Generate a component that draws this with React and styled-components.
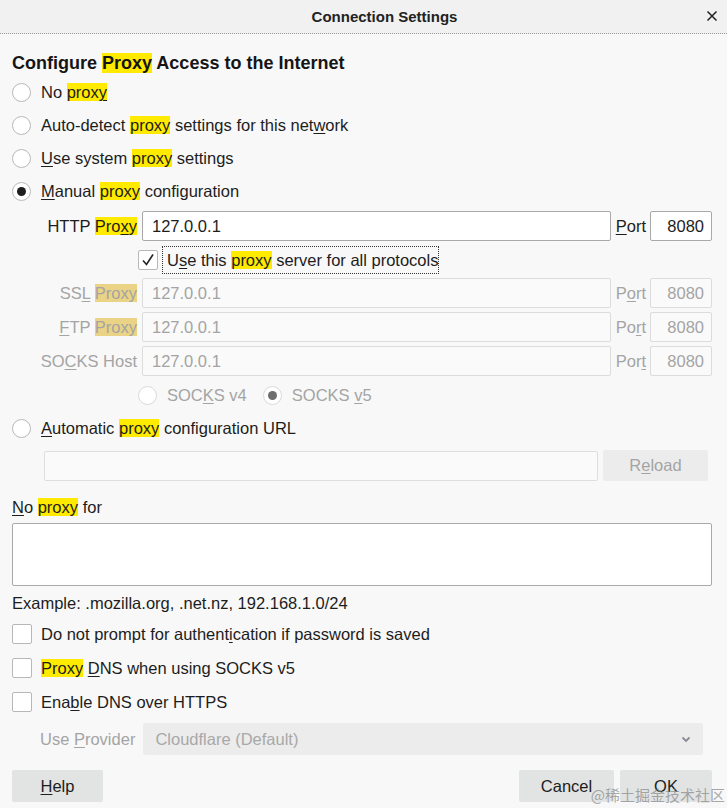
import styled, { createGlobalStyle } from 'styled-components';

const GlobalStyle = createGlobalStyle`
    body {
        margin: 0;
        background: #f8f8f8;
        font-family: "Liberation Sans", Arial, sans-serif;
        color: #1d1d1d;
    }
`;

const Window = styled.div`
    position: relative;
    width: 727px;
    height: 808px;
    overflow: hidden;
    background: #f8f8f8;
    font-size: 16.5px;
`;

const TitleBar = styled.div`
    position: relative;
    height: 33px;
    display: flex;
    align-items: center;
    justify-content: center;
    padding-left: 42px;
    background: #f1f1f1;
    border-bottom: 1px dotted #9a9a9a;
    font-size: 15px;
    font-weight: bold;
    color: #222;
`;

const CloseButton = styled.div`
    position: absolute;
    right: 9px;
    top: 10px;
    width: 12px;
    height: 12px;
    display: flex;
`;

const Content = styled.div`
    padding: 0 15px 0 12px;
`;

const Heading = styled.div`
    margin: 18px 0 2px;
    font-size: 18px;
    font-weight: bold;
    line-height: 22px;
    color: #151515;
`;

const Hl = styled.span`
    background: ${({ $disabled }) => ($disabled ? '#ead384' : '#ffea00')};
`;

const Key = styled.span`
    text-decoration: underline;
    text-underline-offset: 2px;
    text-decoration-thickness: 1px;
`;

const OptionRow = styled.div`
    height: 33px;
    display: flex;
    align-items: center;
    gap: 10px;
`;

const Radio = styled.span`
    width: 17px;
    height: 17px;
    border-radius: 50%;
    border: 1px solid ${({ $disabled }) => ($disabled ? '#dadada' : '#b9b9b9')};
    background: #fff;
    display: flex;
    align-items: center;
    justify-content: center;
    flex-shrink: 0;
    &::after {
        content: '';
        display: ${({ $checked }) => ($checked ? 'block' : 'none')};
        width: 9px;
        height: 9px;
        border-radius: 50%;
        background: ${({ $disabled }) => ($disabled ? '#6e6e6e' : '#1e1e1e')};
    }
`;

const Box = styled.span`
    width: 18px;
    height: 18px;
    border: 1px solid #b8b8b8;
    border-radius: 2px;
    background: #fff;
    display: flex;
    align-items: center;
    justify-content: center;
    flex-shrink: 0;
`;

const ProxyGrid = styled.div`
    margin-top: 1px;
    display: grid;
    grid-template-columns: 125px 1fr auto 62px;
    grid-template-rows: 34px 33px 34px 34px 34px 34px;
    column-gap: 5px;
    align-items: center;
`;

const FieldLabel = styled.div`
    text-align: right;
    white-space: nowrap;
    color: ${({ $disabled }) => ($disabled ? '#a4a4a4' : '#1d1d1d')};
`;

const PortLabel = styled(FieldLabel)`
    margin-right: -1px;
`;

const Input = styled.div`
    height: 28px;
    display: flex;
    align-items: center;
    justify-content: ${({ $right }) => ($right ? 'flex-end' : 'flex-start')};
    padding: 0 ${({ $right }) => ($right ? '7px' : '9px')};
    background: ${({ $disabled }) => ($disabled ? '#fafafa' : '#fff')};
    border: 1px solid ${({ $disabled }) => ($disabled ? '#dcdcdc' : '#a9a9a9')};
    border-radius: 2px;
    color: ${({ $disabled }) => ($disabled ? '#a4a4a4' : '#1d1d1d')};
`;

const SpanRow = styled.div`
    grid-column: 2 / 5;
    display: flex;
    align-items: center;
    margin-left: -4px;
    gap: ${({ $gap }) => $gap || 4}px;
    color: ${({ $disabled }) => ($disabled ? '#a4a4a4' : 'inherit')};
`;

const FocusLabel = styled.span`
    display: inline-block;
    height: 26px;
    line-height: 26px;
    padding: 0 0 0 4px;
    border: 1px dotted #333;
    white-space: nowrap;
`;

const RadioPair = styled.span`
    display: flex;
    align-items: center;
    gap: 10px;
    margin-right: 12px;
`;

const UrlRow = styled.div`
    margin-top: 5px;
    padding: 0 4px 0 32px;
    display: flex;
    align-items: center;
    gap: 5px;
`;

const UrlInput = styled.div`
    flex: 1;
    height: 28px;
    background: #fafafa;
    border: 1px solid #dedede;
    border-radius: 2px;
`;

const Button = styled.div`
    width: ${({ $w }) => $w}px;
    height: ${({ $h }) => $h || 32}px;
    display: flex;
    align-items: center;
    justify-content: center;
    background: ${({ $disabled }) => ($disabled ? '#ececec' : '#e2e4e4')};
    color: ${({ $disabled }) => ($disabled ? '#a4a4a4' : '#1d1d1d')};
    border-radius: 2px;
`;

const SectionLabel = styled.div`
    margin-top: 16px;
    line-height: 20px;
`;

const TextArea = styled.div`
    margin-top: 6px;
    height: 61px;
    background: #fff;
    border: 1px solid #a9a9a9;
    border-radius: 2px;
`;

const Example = styled.div`
    margin-top: 7px;
    line-height: 20px;
`;

const CheckList = styled.div`
    margin-top: 4px;
`;

const CheckRow = styled.div`
    height: 34px;
    display: flex;
    align-items: center;
    gap: 9px;
`;

const ProviderRow = styled.div`
    margin-top: 4px;
    height: 32px;
    padding: 0 9px 0 28px;
    display: flex;
    align-items: center;
    gap: 8px;
    color: #a4a4a4;
`;

const Select = styled.div`
    flex: 1;
    height: 32px;
    display: flex;
    align-items: center;
    justify-content: space-between;
    padding: 0 12px 0 12px;
    background: #ececec;
    border-radius: 2px;
    color: #a8a8a8;
`;

const ButtonBar = styled.div`
    margin-top: 15px;
    display: flex;
    align-items: center;
    gap: 6px;
`;

const Spacer = styled.div`
    flex: 1;
`;

const Watermark = styled.div`
    position: absolute;
    right: 2px;
    bottom: 3px;
    font-family: "Noto Sans CJK SC", sans-serif;
    font-size: 15px;
    color: rgba(140, 140, 140, 0.75);
`;

function Check() {
    return (
        <svg width="14" height="14" viewBox="0 0 14 14">
            <polyline points="2,7.5 5.5,11.5 12,1.5" fill="none" stroke="#222" strokeWidth="1.6" />
        </svg>
    );
}

function Chevron() {
    return (
        <svg width="10" height="7" viewBox="0 0 10 7">
            <polyline points="1.5,1.5 5,5 8.5,1.5" fill="none" stroke="#8b8b98" strokeWidth="1.8" />
        </svg>
    );
}

const ports = [
    { id: 'ssl', label: <>SS<Key>L</Key> <Hl $disabled>Proxy</Hl></>, port: <>P<Key>o</Key>rt</> },
    { id: 'ftp', label: <><Key>F</Key>TP <Hl $disabled>Proxy</Hl></>, port: <>Po<Key>r</Key>t</> },
    { id: 'socks', label: <>SO<Key>C</Key>KS Host</>, port: <>Por<Key>t</Key></> },
];

export default function App() {
    return (
        <Window>
            <GlobalStyle />
            <TitleBar>
                Connection Settings
                <CloseButton>
                    <svg width="12" height="12" viewBox="0 0 12 12">
                        <path d="M1.5 1.5 L10.5 10.5 M10.5 1.5 L1.5 10.5" stroke="#222" strokeWidth="1.5" />
                    </svg>
                </CloseButton>
            </TitleBar>
            <Content>
                <Heading>Configure <Hl>Proxy</Hl> Access to the Internet</Heading>
                <OptionRow><Radio /><span>No <Hl>prox<Key>y</Key></Hl></span></OptionRow>
                <OptionRow><Radio /><span>Auto-detect <Hl>proxy</Hl> settings for this net<Key>w</Key>ork</span></OptionRow>
                <OptionRow><Radio /><span><Key>U</Key>se system <Hl>proxy</Hl> settings</span></OptionRow>
                <OptionRow><Radio $checked /><span><Key>M</Key>anual <Hl>proxy</Hl> configuration</span></OptionRow>

                <ProxyGrid>
                    <FieldLabel>HTTP <Hl>Pro<Key>x</Key>y</Hl></FieldLabel>
                    <Input>127.0.0.1</Input>
                    <PortLabel><Key>P</Key>ort</PortLabel>
                    <Input $right>8080</Input>

                    <SpanRow>
                        <Box><Check /></Box>
                        <FocusLabel>U<Key>s</Key>e this <Hl>proxy</Hl> server for all protocols</FocusLabel>
                    </SpanRow>

                    {ports.flatMap(p => [
                        <FieldLabel key={p.id + 'l'} $disabled>{p.label}</FieldLabel>,
                        <Input key={p.id + 'i'} $disabled>127.0.0.1</Input>,
                        <PortLabel key={p.id + 'p'} $disabled>{p.port}</PortLabel>,
                        <Input key={p.id + 'n'} $disabled $right>8080</Input>,
                    ])}

                    <SpanRow $disabled $gap={0}>
                        <RadioPair><Radio $disabled /><span>SOC<Key>K</Key>S v4</span></RadioPair>
                        <RadioPair><Radio $disabled $checked /><span>SOCKS <Key>v</Key>5</span></RadioPair>
                    </SpanRow>
                </ProxyGrid>

                <OptionRow><Radio /><span><Key>A</Key>utomatic <Hl>proxy</Hl> configuration URL</span></OptionRow>
                <UrlRow>
                    <UrlInput />
                    <Button $w={105} $h={31} $disabled>R<Key>e</Key>load</Button>
                </UrlRow>

                <SectionLabel><Key>N</Key>o <Hl>proxy</Hl> for</SectionLabel>
                <TextArea />
                <Example>Example: .mozilla.org, .net.nz, 192.168.1.0/24</Example>

                <CheckList>
                    <CheckRow><Box /><span>Do not prompt for authent<Key>i</Key>cation if password is saved</span></CheckRow>
                    <CheckRow><Box /><span><Hl>Proxy</Hl> <Key>D</Key>NS when using SOCKS v5</span></CheckRow>
                    <CheckRow><Box /><span>Ena<Key>b</Key>le DNS over HTTPS</span></CheckRow>
                </CheckList>

                <ProviderRow>
                    <span>Use <Key>P</Key>rovider</span>
                    <Select>
                        <span>Cloudflare (Default)</span>
                        <Chevron />
                    </Select>
                </ProviderRow>

                <ButtonBar>
                    <Button $w={91}><Key>H</Key>elp</Button>
                    <Spacer />
                    <Button $w={95}>Cancel</Button>
                    <Button $w={92}>OK</Button>
                </ButtonBar>
            </Content>
            <Watermark>@稀土掘金技术社区</Watermark>
        </Window>
    );
}
